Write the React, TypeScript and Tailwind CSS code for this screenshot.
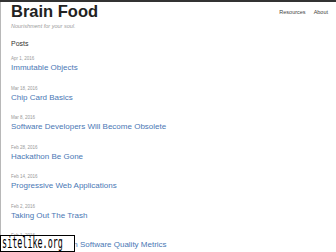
import React from "react";

const posts = [
  { date: "Apr 1, 2016", title: "Immutable Objects" },
  { date: "Mar 18, 2016", title: "Chip Card Basics" },
  { date: "Mar 8, 2016", title: "Software Developers Will Become Obsolete" },
  { date: "Feb 28, 2016", title: "Hackathon Be Gone" },
  { date: "Feb 14, 2016", title: "Progressive Web Applications" },
  { date: "Feb 2, 2016", title: "Taking Out The Trash" },
  { date: "Feb 1, 2016", title: "A Quick Lesson on Software Quality Metrics" },
];

export default function App() {
  return (
    <div
      className="relative w-[336px] h-[252px] overflow-hidden bg-white"
      style={{ fontFamily: '"Liberation Sans", Arial, sans-serif' }}
    >
      <div className="h-[2px] bg-[#333333]" />
      <div className="border-l border-[#b8b8b8] h-[250px] pl-[10px] pr-[8px]">
        <div className="flex items-start justify-between">
          <div>
            <div className="text-[16.5px] leading-[19px] font-bold text-[#222222]">
              Brain Food
            </div>
            <div className="text-[5.5px] leading-[6px] italic text-[#9a9a9a] mt-[1.5px]">
              Nourishment for your soul.
            </div>
          </div>
          <div className="flex gap-[8px] text-[5.5px] leading-[8px] text-[#444444] pt-[6px]">
            <span>Resources</span>
            <span>About</span>
          </div>
        </div>
        <div className="text-[7px] leading-[10px] text-[#333333] mt-[10.5px]">Posts</div>
        <div className="flex flex-col gap-[11.5px] mt-[6px]">
          {posts.map((p) => (
            <div key={p.title} className="flex flex-col">
              <div className="text-[4.5px] leading-[7px] text-[#999999]">{p.date}</div>
              <div className="text-[8px] leading-[11px] text-[#4a78b5]">{p.title}</div>
            </div>
          ))}
        </div>
      </div>
      <div className="absolute left-0 bottom-0 w-[75px] h-[17px] bg-white border border-black overflow-hidden">
        <div
          className="text-black text-[15px] leading-[15px] pl-[2px] whitespace-nowrap origin-left scale-x-[0.56]"
          style={{ fontFamily: '"DejaVu Sans Mono", monospace' }}
        >
          sitelike.org
        </div>
      </div>
    </div>
  );
}
